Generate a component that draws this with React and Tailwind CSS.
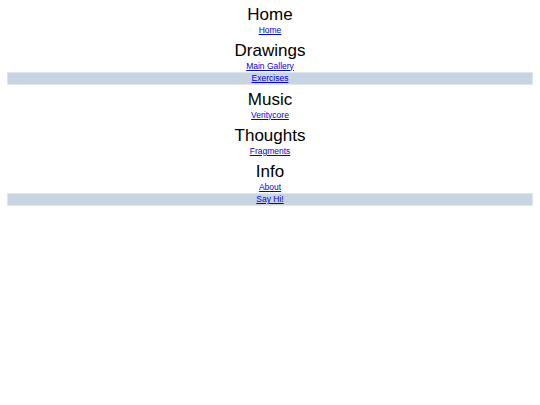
import React from "react";

const sections = [
  { title: "Home", links: [{ t: "Home" }] },
  { title: "Drawings", links: [{ t: "Main Gallery" }, { t: "Exercises", hl: true }] },
  { title: "Music", links: [{ t: "Veritycore" }] },
  { title: "Thoughts", links: [{ t: "Fragments" }] },
  { title: "Info", links: [{ t: "About" }, { t: "Say Hi!", hl: true }] },
];

export default function App() {
  return (
    <div className="w-[540px] h-[405px] bg-white font-['Liberation_Sans',Arial,sans-serif] text-center">
      {sections.map((s) => (
        <div key={s.title} className="flex flex-col">
          <div className="h-[23px] pt-[6px] text-[17px] leading-[17px] text-black">{s.title}</div>
          {s.links.map((l) =>
            l.hl ? (
              <div
                key={l.t}
                className="mx-[7px] h-[13px] bg-[#c8d4e1] border border-[#dfe6ee] text-[8.5px] leading-[11px]"
              >
                <a href="#" className="text-[#0000ee] underline">{l.t}</a>
              </div>
            ) : (
              <div key={l.t} className="h-[13px] pt-[0.5px] text-[8.5px] leading-[12.5px]">
                <a href="#" className="text-[#0000ee] underline">{l.t}</a>
              </div>
            )
          )}
        </div>
      ))}
    </div>
  );
}
